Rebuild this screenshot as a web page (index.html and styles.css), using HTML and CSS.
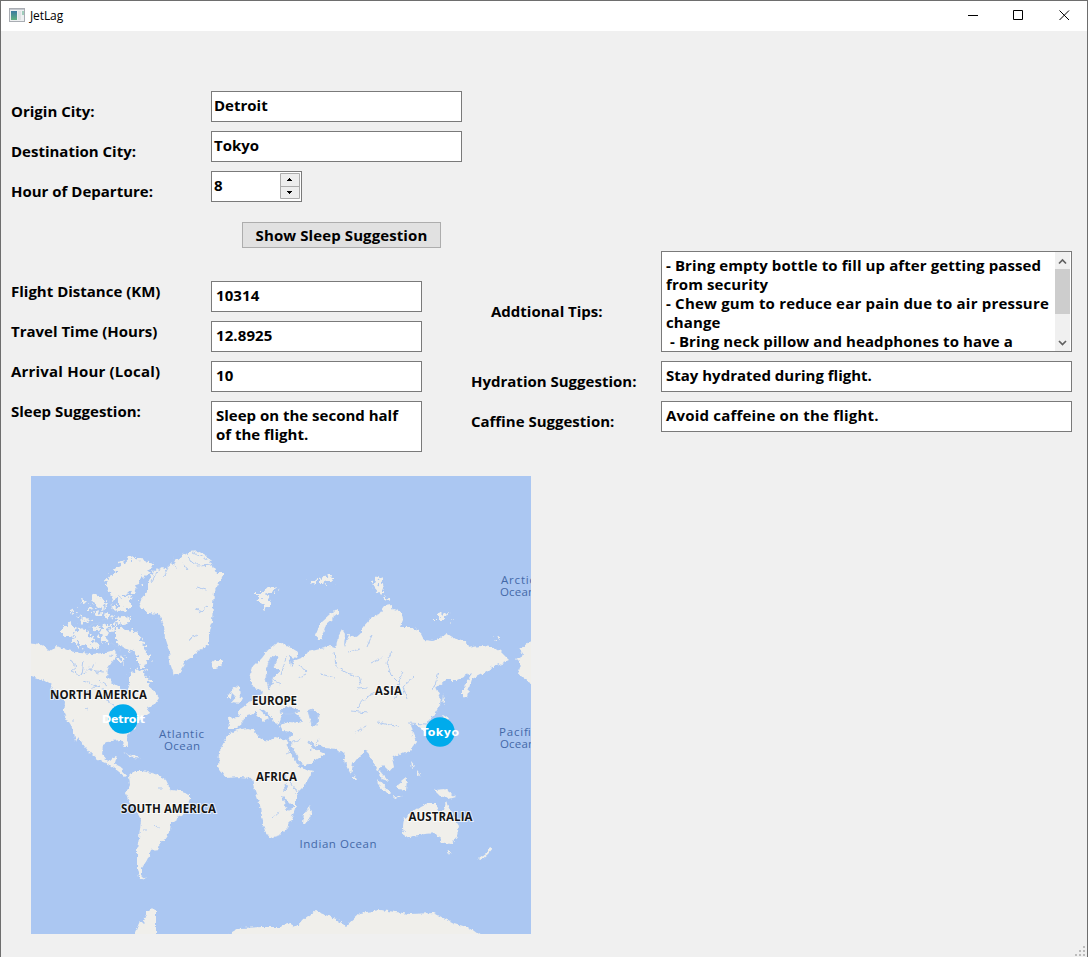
FILE: index.html
```html
<!DOCTYPE html>
<html lang="en">
<head>
<meta charset="utf-8">
<title>JetLag</title>
<link rel="stylesheet" href="styles.css">
</head>
<body>
<div class="window">
  <header class="titlebar">
    <svg class="app-icon" width="16" height="14" viewBox="0 0 16 14"><defs><linearGradient id="ic" x2="0" y2="1"><stop stop-color="#3b7aa0"/><stop offset="1" stop-color="#62b07f"/></linearGradient></defs><rect x=".5" y=".5" width="15" height="13" fill="#eef0f1" stroke="#a9adb3"/><path d="M1 1.5h14" stroke="#c4c8ce"/><rect x="2" y="3" width="6" height="9" fill="url(#ic)"/><path d="M9 3h3v9H9z" fill="#dfe2e4"/><path d="M13 3h2v4h-2z" fill="#9fcdbb"/></svg>
    <span class="title">JetLag</span>
    <svg class="controls" width="110" height="30" viewBox="0 0 110 30" fill="none" stroke="#000"><path d="M5 14.500h10M50.500 9.500h9v9h-9zM96.500 9.500l9.500 9.500M106 9.500l-9.500 9.500"/></svg>
  </header>
  <main class="content">
    <section class="form">
      <label>Origin City:</label><div class="field city">Detroit</div>
      <label>Destination City:</label><div class="field city">Tokyo</div>
      <label>Hour of Departure:</label>
      <div class="field spin"><span>8</span>
        <svg width="20" height="26" viewBox="0 0 20 26"><path d="M.5.5h19v25H.5z" fill="#ededed" stroke="#acacac"/><path d="M0 13.500h20" stroke="#acacac"/><path d="M7 8h5v-1h-1v-1h-1v-1h-1v1h-1v1h-1zM7 18h5v1h-1v1h-1v1h-1v-1h-1v-1h-1z" fill="#000"/></svg>
      </div>
    </section>
    <button class="action">Show Sleep Suggestion</button>
    <div class="columns">
      <section class="results">
        <label>Flight Distance (KM)</label><div class="field pad">10314</div>
        <label>Travel Time (Hours)</label><div class="field pad">12.8925</div>
        <label class="wide">Arrival Hour (Local)</label><div class="field pad">10</div>
        <label>Sleep Suggestion:</label><div class="field note tall">Sleep on the second half<br>of the flight.</div>
      </section>
      <section class="advice">
        <label class="tips-label">Addtional Tips:</label>
        <div class="field tips"><div class="tips-text">- Bring empty bottle to fill up after getting passed
from security
<span class="stretch">- Chew gum to reduce ear pain due to air pressure</span>
change
 - Bring neck pillow and headphones to have a</div>
          <div class="scroll"><svg width="15" height="99" viewBox="0 0 15 99"><path d="M0 17h15v45H0z" fill="#cdcdcd"/><path d="M4 11.500l3.500-3.500 3.500 3.500M4 89l3.500 3.500L11 89" fill="none" stroke="#606060" stroke-width="1.700"/></svg></div>
        </div>
        <label>Hydration Suggestion:</label><div class="field note">Stay hydrated during flight.</div>
        <label>Caffine Suggestion:</label><div class="field note wide">Avoid caffeine on the flight.</div>
      </section>
    </div>
    <svg class="map" width="500" height="458" viewBox="31 476 500 458">
      <defs>
        <filter id="coast" filterUnits="userSpaceOnUse" x="21" y="466" width="520" height="478"><feTurbulence type="fractalNoise" baseFrequency=".22" numOctaves="3" seed="4"/><feDisplacementMap in="SourceGraphic" scale="5" xChannelSelector="R" yChannelSelector="G"/></filter>
        <filter id="arctic" filterUnits="userSpaceOnUse" x="21" y="466" width="520" height="478"><feTurbulence type="fractalNoise" baseFrequency=".25" numOctaves="3" seed="9"/><feDisplacementMap in="SourceGraphic" scale="12" xChannelSelector="R" yChannelSelector="G"/></filter>
      </defs>
      <rect class="sea" x="31" y="476" width="500" height="458"/>
      <g class="land" filter="url(#coast)">
        <path d="M26 642L36 643 45 647 49 651 57 646 66 650 80 653 92 654 104 653 114 650 117 655 112 662 108 668 107 677 113 683 120 687 123 694 127 693 130 683 130 673 137 672 142 678 147 685 153 690 159 698 155 704 147 707 150 713 142 718 137 725 127 735 128 747 124 747 121 740 110 741 103 745 102 755 107 761 112 759 117 755 115 763 121 766 122 772 128 775 125 777 118 771 110 765 98 760 92 755 85 747 78 737 76 742 73 730 68 722 64 713 65 703 63 697 57 695 51 685 43 680 26 674z"/>
        <path d="M129 776L134 771 142 771 152 773 159 775 166 780 171 790 181 791 190 794 190 799 185 807 183 815 171 823 170 831 164 840 160 843 158 850 151 851 147 860 142 868 142 876 146 879 139 877 137 868 137 850 139 838 141 820 136 810 128 801 126 793 130 784z"/>
        <path d="M139 602L148 592 148 582 154 571 161 567 167 568 177 560 183 556 189 552 199 551 207 556 212 564 216 573 224 573 219 583 214 592 213 605 212 622 209 637 209 645 199 650 192 657 184 662 180 674 174 675 170 663 169 650 165 638 164 625 158 614 149 613 142 608z"/>
        <path d="M211 663L215 660 223 660 221 666 213 669z"/>
        <path d="M228 718L238 717 240 709 247 704 257 698 263 693 260 689 257 688 252 686 250 677 253 667 262 658 268 650 275 644 282 643 290 647 298 652 296 658 289 656 291 666 296 660 304 657 308 652 316 650 324 648 330 646 336 648 338 636 342 629 345 634 344 647 349 635 357 638 363 627 372 617 379 614 385 606 391 605 393 609 402 612 403 620 400 627 413 627 419 630 424 640 432 641 440 638 446 633 454 638 467 642 468 648 479 646 493 647 500 651 509 660 502 663 494 666 482 674 472 679 467 696 463 698 463 688 472 673 458 680 445 680 436 688 441 698 440 705 434 715 427 722 431 731 427 735 421 727 411 724 413 733 416 742 410 750 400 754 392 758 394 767 390 772 382 764 379 770 385 777 388 781 382 779 377 768 370 757 367 750 360 755 353 764 351 775 346 764 344 754 338 749 323 748 320 746 312 744 312 748 325 754 316 760 305 766 301 764 294 750 289 740 293 732 283 731 280 725 289 722 299 723 302 719 290 709 283 712 279 723 275 724 271 716 264 710 259 709 270 719 264 722 255 713 247 715 242 723 236 728 229 728z"/>
        <path d="M229 734L237 730 247 728 254 730 259 738 269 741 275 737 287 740 292 755 300 768 313 771 304 786 296 794 296 806 291 819 287 828 280 835 270 838 265 831 261 817 260 805 254 788 252 778 240 777 226 778 218 767 219 752 224 742z"/>
        <path d="M303 824L304 814 310 806 312 812 307 823z"/>
        <path d="M404 818L414 811 420 807 428 803 436 803 439 811 444 810 446 802 452 814 459 826 457 836 451 844 442 842 436 833 425 834 413 836 405 838 403 827z"/>
        <path d="M447 851L451 851 449 855z M478 859L486 853 490 846 493 848 488 854 481 860z M434 790L445 789 456 797 449 799 440 796z M397 785L407 777 406 790 398 789z M377 778L391 793 388 795 378 784z M393 796L402 797 394 799z M411 761l4 5-3 2z M417 771l3 4-3 1z M354 775l2 4-2 1z"/>
        <path d="M234 686L239 687 240 697 243 699 241 703 231 702 236 696 232 692z M227 695L232 692 231 699 227 698z M442 702l1-8 2 11z M443 714l6 4-5 3z M423 728l6 2-4 4z"/>
        <path d="M536 636L529 642 520 649 523 655 516 659 521 664 518 674 526 680 537 687z M318 640L316 634 321 622 330 614 339 609 339 613 326 624 321 640z"/>
        <path d="M132 939L140 921 143 924 146 914 152 908 156 912 156 939z M221 939L240 928 262 927 280 927 290 923 297 927 303 920 315 911 336 919 346 926 360 913 380 910 410 914 434 913 453 923 470 928 485 939z"/>
        <path d="M123 752l11 4 7 3-7-1z"/>
      </g>
      <g class="land" filter="url(#arctic)">
        <path d="M105 580L115 572 118 565 129 559 140 558 153 564 151 570 142 579 135 590 122 595 113 600 109 591z"/>
        <path d="M118 597l14-2-2 14-12 2z M62 628l8-5 7 5-5 10-10-2z M76 630l10 0 10 12 3 7-14-2-13-6z M77 615l14 5-6 3z M81 600l6 1-4 4z M92 592l16 11-5 7-8-5z M100 628l8-4-1 21-6-6z M115 620l16-4v7l-15 2z M116 628l18 2 10 14 6 16-8 4-5-10-14-7-7-4z M118 658l5-3 2 10z M70 612l5-3-1 4z M130 672l12-2 9 12-8 9-9-8z"/>
        <path d="M95 613l6-1 2 5-7 1z M106 612l6 3-4 5-3-4z M88 609l4-2 2 3-5 2z M112 604l4 2-1 6-4-2z M109 626l5-2 1 6-4 2z M95 625l4 1-1 5-4-1z M138 657l9 5-3 8-6-6z"/>
        <path d="M257 592l8 0 3-6 10 2-5 5-6 2 4 9-6 4-4-7-4-2z M307 582l9-2v5z M320 577l12-2 3 6-15 3z M373 580l6-3 5 15-3 3-6-7z M383 597l6 0-2 5z M436 615l12-1-4 6-8 0z M450 618h4v4z M496 637h4v3z"/>
      </g>
      <g class="inland" filter="url(#coast)">
        <path d="M69 660l8 6-6 5 9 4m4-15l-2 14 8-5 8 4m-3 12l-12-4m4 12l9-8 10 6m-11-28l-5 7 14 2m-5 8l8 6m1 15l11 8m4 1l-2 6 9 4m-22-19l-6-4m8-55l12 8m-13 5l12 1m-3-40l-16 4 3-16m8 8l-3-12m-21 27l12-5m-26 6l15 2M151 583l8-15m4 9l5-9m8 1l-2-12m9 6l5 7m-1-13l11 9m-5-13l15 7m-11 6l16-1m-6 25l-10-3m10 20l-8 6m-2 22l-9 5m7-31l8 2"/>
        <path d="M334 652l2 14 11 7 12 4 2 7m-40-10l14 4m14-26l11-3m7-2l5-12m-1 28l12-6m-25 32l9-1m25-37l-6 12 5 12 8 8-8 9-12-1-12 6-10 11m45-37l-7 28m20-23l-12 11 4 12m32-26l-6 17m-82 21l16 2m10 9l22 5m9-4l19 1 7 12 13-5m-80-5l-12 7m-36 6l-8 10m-21-5l10-5m-16 36l8 8 5 9M299 664l7 8m-8 6l8-4m-25 11l-9-6m9-4l5-18"/>
        <path class="lake" d="M272 656l-5 10-1 13 3 10 5-12 5-5-5-5 4-9z M281 710l4-4 9 2 5 3-8 3-9 0z M308 711l5-2 5 5-1 12-5-1z M308 741l10 7-3 2z M288 743l14 22-2 1-13-20z M284 784l5 2-4 5z M282 795l5 15 7-3m-14 5l-8 6"/>
        <path d="M158 788h4m-19 42h4m13-1l-6-4M71 721h4m10-13l4 2M286 754l5-2"/>
      </g>
      <g class="continent">
        <text x="50" y="699" textLength="97">NORTH AMERICA</text><text x="252" y="705" textLength="45">EUROPE</text><text x="375" y="695" textLength="27">ASIA</text><text x="256" y="781" textLength="41">AFRICA</text><text x="121" y="813" textLength="95">SOUTH AMERICA</text><text x="408.500" y="821" textLength="64">AUSTRALIA</text>
      </g>
      <g class="ocean">
        <text x="159" y="738" textLength="45">Atlantic</text><text x="164" y="750" textLength="36">Ocean</text><text x="299.500" y="848" textLength="77">Indian Ocean</text><text x="501" y="584" textLength="34">Arctic</text><text x="500" y="596" textLength="35">Ocean</text><text x="499" y="736" textLength="38">Pacific</text><text x="500" y="748" textLength="35">Ocean</text>
      </g>
      <g class="pin"><circle cx="123" cy="719" r="14.700"/><circle cx="440" cy="732" r="14.700"/><text x="102" y="723" textLength="43">Detroit</text><text x="421" y="736" textLength="38">Tokyo</text></g>
    </svg>
    <svg class="grip" width="12" height="12" viewBox="0 0 12 12"><path d="M9 1h2v2H9zM9 5h2v2H9zM5 5h2v2H5zM9 9h2v2H9zM5 9h2v2H5zM1 9h2v2H1z" fill="#bcbcbc"/></svg>
  </main>
</div>
</body>
</html>
```
FILE: styles.css
```css
* { box-sizing: border-box; }
body { margin: 0; background: #fff; overflow: hidden; }
.window { width: 1088px; height: 957px; border: 1px solid #6e6e6e; border-bottom: 0; background: #f0f0f0; font: 700 15px/19px "Open Sans", sans-serif; color: #000; }
.titlebar { height: 30px; background: #fff; display: flex; align-items: center; padding: 0 14px 0 8px; }
.title { font: 12px/16px "Open Sans", sans-serif; letter-spacing: -.1px; margin-left: 5px; }
.app-icon { margin-top: -2px; }
.controls { margin-left: auto; }
.content { position: relative; height: 926px; padding: 60px 15px 0 10px; }
label { padding-top: 11px; white-space: nowrap; }
.field { background: #fff; border: 1px solid #7a7a7a; height: 31px; padding: 4px 2px; white-space: nowrap; }
.form { display: grid; grid-template-columns: 200px 251px; row-gap: 9px; }
.spin { width: 91px; display: flex; justify-content: space-between; padding-right: 1px; }
.spin svg { margin-top: -3px; }
.action { display: block; width: 199px; height: 26px; margin: 20px 0 0 231px; padding: 0; border: 1px solid #adadad; background: #e1e1e1; font: inherit; color: inherit; letter-spacing: .1px; white-space: nowrap; }
.columns { display: flex; margin-top: 3px; gap: 49px; height: 201px; }
.results { display: grid; grid-template-columns: 200px 211px; row-gap: 9px; align-content: start; padding-top: 30px; }
.results label { padding-top: 1px; }
.pad { padding-left: 4px; letter-spacing: .1px; }
.wide { letter-spacing: .2px; }
.note { padding-left: 4px; }
.tall { height: 51px; }
.advice { display: grid; grid-template-columns: 190px 411px; row-gap: 9px; align-content: start; }
.tips-label { padding: 51px 0 0 20px; }
.tips { height: 101px; padding: 0 1px 0 4px; display: flex; justify-content: space-between; overflow: hidden; }
.tips-text { white-space: pre; padding-top: 4px; width: 384px; letter-spacing: .1px; }
.stretch { letter-spacing: .2px; }
.scroll { width: 15px; height: 99px; background: #f0f0f0; }
.map { display: block; margin: 24px 0 0 20px; }
.sea { fill: #abc7f2; }
.land { fill: #f0efeb; }
.inland { fill: none; stroke: #b3cbf0; stroke-width: 1; }
.inland .lake { fill: #abc7f2; }
.continent { font: 700 11.5px "Open Sans", sans-serif; fill: #151515; stroke: #fff; stroke-width: 2px; stroke-opacity: .7; paint-order: stroke; }
.ocean { font: 11.5px "Open Sans", sans-serif; fill: #4469a8; }
.pin { font: bold 11px "DejaVu Sans", sans-serif; fill: #fff; }
.pin circle { fill: #00abec; }
.grip { position: absolute; right: 1px; bottom: 0; }
```
